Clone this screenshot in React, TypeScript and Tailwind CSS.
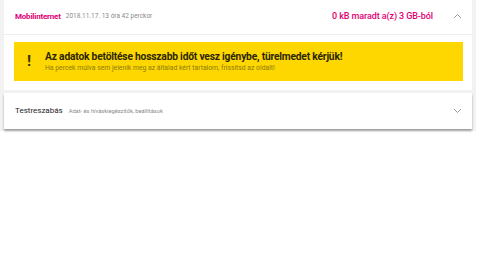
import React from 'react';

function Chevron({ up }: { up?: boolean }) {
  return (
    <svg width="9" height="6" viewBox="0 0 9 6" className="text-[#9a9a9a]">
      <path
        d={up ? 'M1 5 L4.5 1.5 L8 5' : 'M1 1 L4.5 4.5 L8 1'}
        fill="none"
        stroke="currentColor"
        strokeWidth="1"
      />
    </svg>
  );
}

function App() {
  return (
    <div className="min-h-[256px] bg-white" style={{ fontFamily: 'Roboto, "Noto Sans", sans-serif' }}>
      <div className="w-[476px] bg-[#f2f2f2] px-[4px] pb-[2px] flex flex-col gap-[3px]">
        {/* Mobilinternet card */}
        <div className="bg-white">
          <div className="h-[35px] flex items-center pl-[11px] pr-[10px] border-b border-[#ececec]">
            <span className="text-[8px] font-bold text-[#e20074] tracking-[-0.2px]">Mobilinternet</span>
            <span className="ml-[5px] text-[6.5px] text-[#8a8a8a]">2018.11.17. 13 óra 42 perckor</span>
            <span className="ml-auto text-[9px] font-medium text-[#e20074] tracking-[-0.1px]">0 kB maradt a(z) 3 GB-ból</span>
            <span className="ml-[20px] mb-[3px] flex">
              <Chevron up />
            </span>
          </div>
          <div className="pt-[7px] pb-[9px] pl-[10px] pr-[9px]">
            <div className="bg-[#fed700] h-[39px] flex items-center pl-[13px]">
              <span className="text-[15px] font-bold text-[#3a3000] leading-none w-[18px]">!</span>
              <div className="flex flex-col">
                <span className="text-[10.25px] font-bold text-[#2b2600] leading-[13px] tracking-[-0.2px]">
                  Az adatok betöltése hosszabb időt vesz igénybe, türelmedet kérjük!
                </span>
                <span className="text-[6.8px] text-[#8c7a12] leading-[10px]">
                  Ha percek múlva sem jelenik meg az általad kért tartalom, frissítsd az oldalt!
                </span>
              </div>
            </div>
          </div>
        </div>

        {/* Testreszabás card */}
        <div className="bg-white h-[36px] flex items-center pl-[11px] pr-[10px] shadow-[0_2px_2px_rgba(0,0,0,0.35)]">
          <span className="text-[8px] text-[#262626]">Testreszabás</span>
          <span className="ml-[6px] text-[5.7px] text-[#8a8a8a]">Adat- és híváskiegészítők, beállítások</span>
          <span className="ml-auto flex">
            <Chevron />
          </span>
        </div>
      </div>
    </div>
  );
}

export default App;
